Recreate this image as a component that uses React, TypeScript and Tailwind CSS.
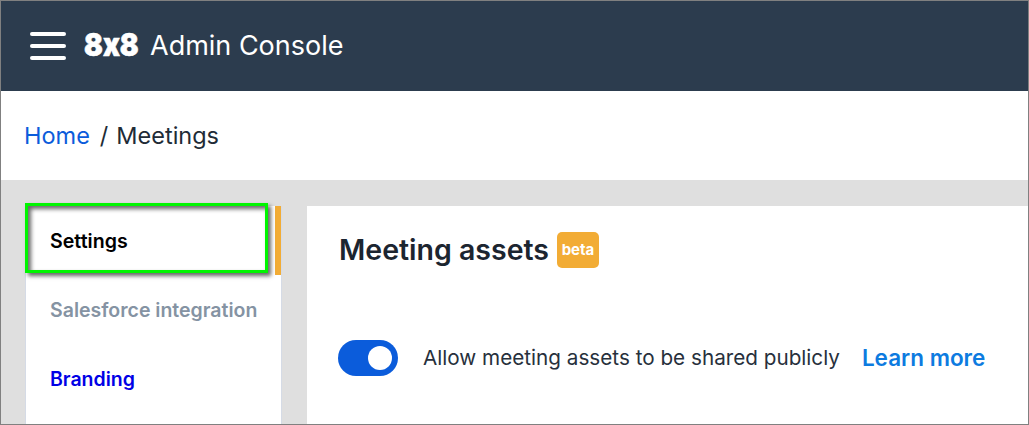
import React from "react";

const font = { fontFamily: "Inter, sans-serif" };

export default function App() {
  return (
    <div
      style={font}
      className="flex h-[425px] w-[1029px] flex-col overflow-hidden border border-[#808080] bg-[#dfdfdf]"
    >
      {/* Top bar */}
      <header className="flex h-[90px] shrink-0 items-center bg-[#2c3c4e] pl-[29px] text-white">
        <div className="flex w-[36px] flex-col gap-[8px]">
          <span className="h-[4px] rounded-full bg-white" />
          <span className="h-[4px] rounded-full bg-white" />
          <span className="h-[4px] rounded-full bg-white" />
        </div>
        <span className="mb-[2px] ml-[18px] w-[54px] origin-left scale-x-[0.87] text-[32px] leading-none font-black [font-feature-settings:'calt'_0] [-webkit-text-stroke:0.6px_white]">
          8x8
        </span>
        <span className="mb-[2px] ml-[12px] text-[27px] leading-none">Admin Console</span>
      </header>

      {/* Breadcrumb */}
      <nav className="flex h-[89px] shrink-0 items-center bg-white pl-[23px] text-[23.5px] text-[#212b36]">
        <a className="text-[#0b5cdb]">Home</a>
        <span className="mr-[8px] ml-[10px]">/</span>
        <span>Meetings</span>
      </nav>

      {/* Body */}
      <div className="flex flex-1 gap-[25px] pt-[26px] pl-[24px]">
        <aside className="relative w-[257px] shrink-0 border-x border-[#d5dbe6] bg-white">
          <div className="flex h-[69px] items-center justify-between">
            <span className="pt-[2px] pl-[24px] text-[19.6px] font-semibold text-black">Settings</span>
            <span className="h-full w-[6px] bg-[#f2ac35]" />
          </div>
          <div className="flex h-[69px] items-center pt-[2px] pl-[24px] text-[19.5px] font-semibold text-[#8593a3]">
            Salesforce integration
          </div>
          <div className="flex h-[69px] items-center pt-[2px] pl-[24px] text-[19.5px] font-semibold text-[#0000e6]">
            Branding
          </div>
          {/* Highlight box drawn over the first row */}
          <div className="absolute top-[-3px] left-[-1px] h-[70px] w-[243px] border-[3px] border-[#00f500] shadow-[inset_3px_3px_4px_rgba(0,0,0,0.6),3px_3px_4px_rgba(0,0,0,0.6)]" />
        </aside>

        <main className="flex-1 bg-white pt-[26px] pl-[31px]">
          <div className="ml-[1px] flex items-center gap-[8px]">
            <h1 className="text-[28.5px] leading-[36px] font-semibold text-[#1c2530]">Meeting assets</h1>
            <span className="flex h-[36px] w-[42px] items-center justify-center rounded-[5px] bg-[#f2ac35] text-[15px] font-bold text-white">
              beta
            </span>
          </div>
          <div className="mt-[72px] flex items-center">
            <div className="flex h-[36px] w-[60px] items-center justify-end rounded-full bg-[#0b5cdb] pr-[6px]">
              <span className="h-[24px] w-[24px] rounded-full bg-white" />
            </div>
            <span className="ml-[25px] text-[20.7px] text-[#27303c]">
              Allow meeting assets to be shared publicly
            </span>
            <a className="ml-[22px] text-[22.5px] font-semibold text-[#0d7be0]">Learn more</a>
          </div>
        </main>
      </div>
    </div>
  );
}
